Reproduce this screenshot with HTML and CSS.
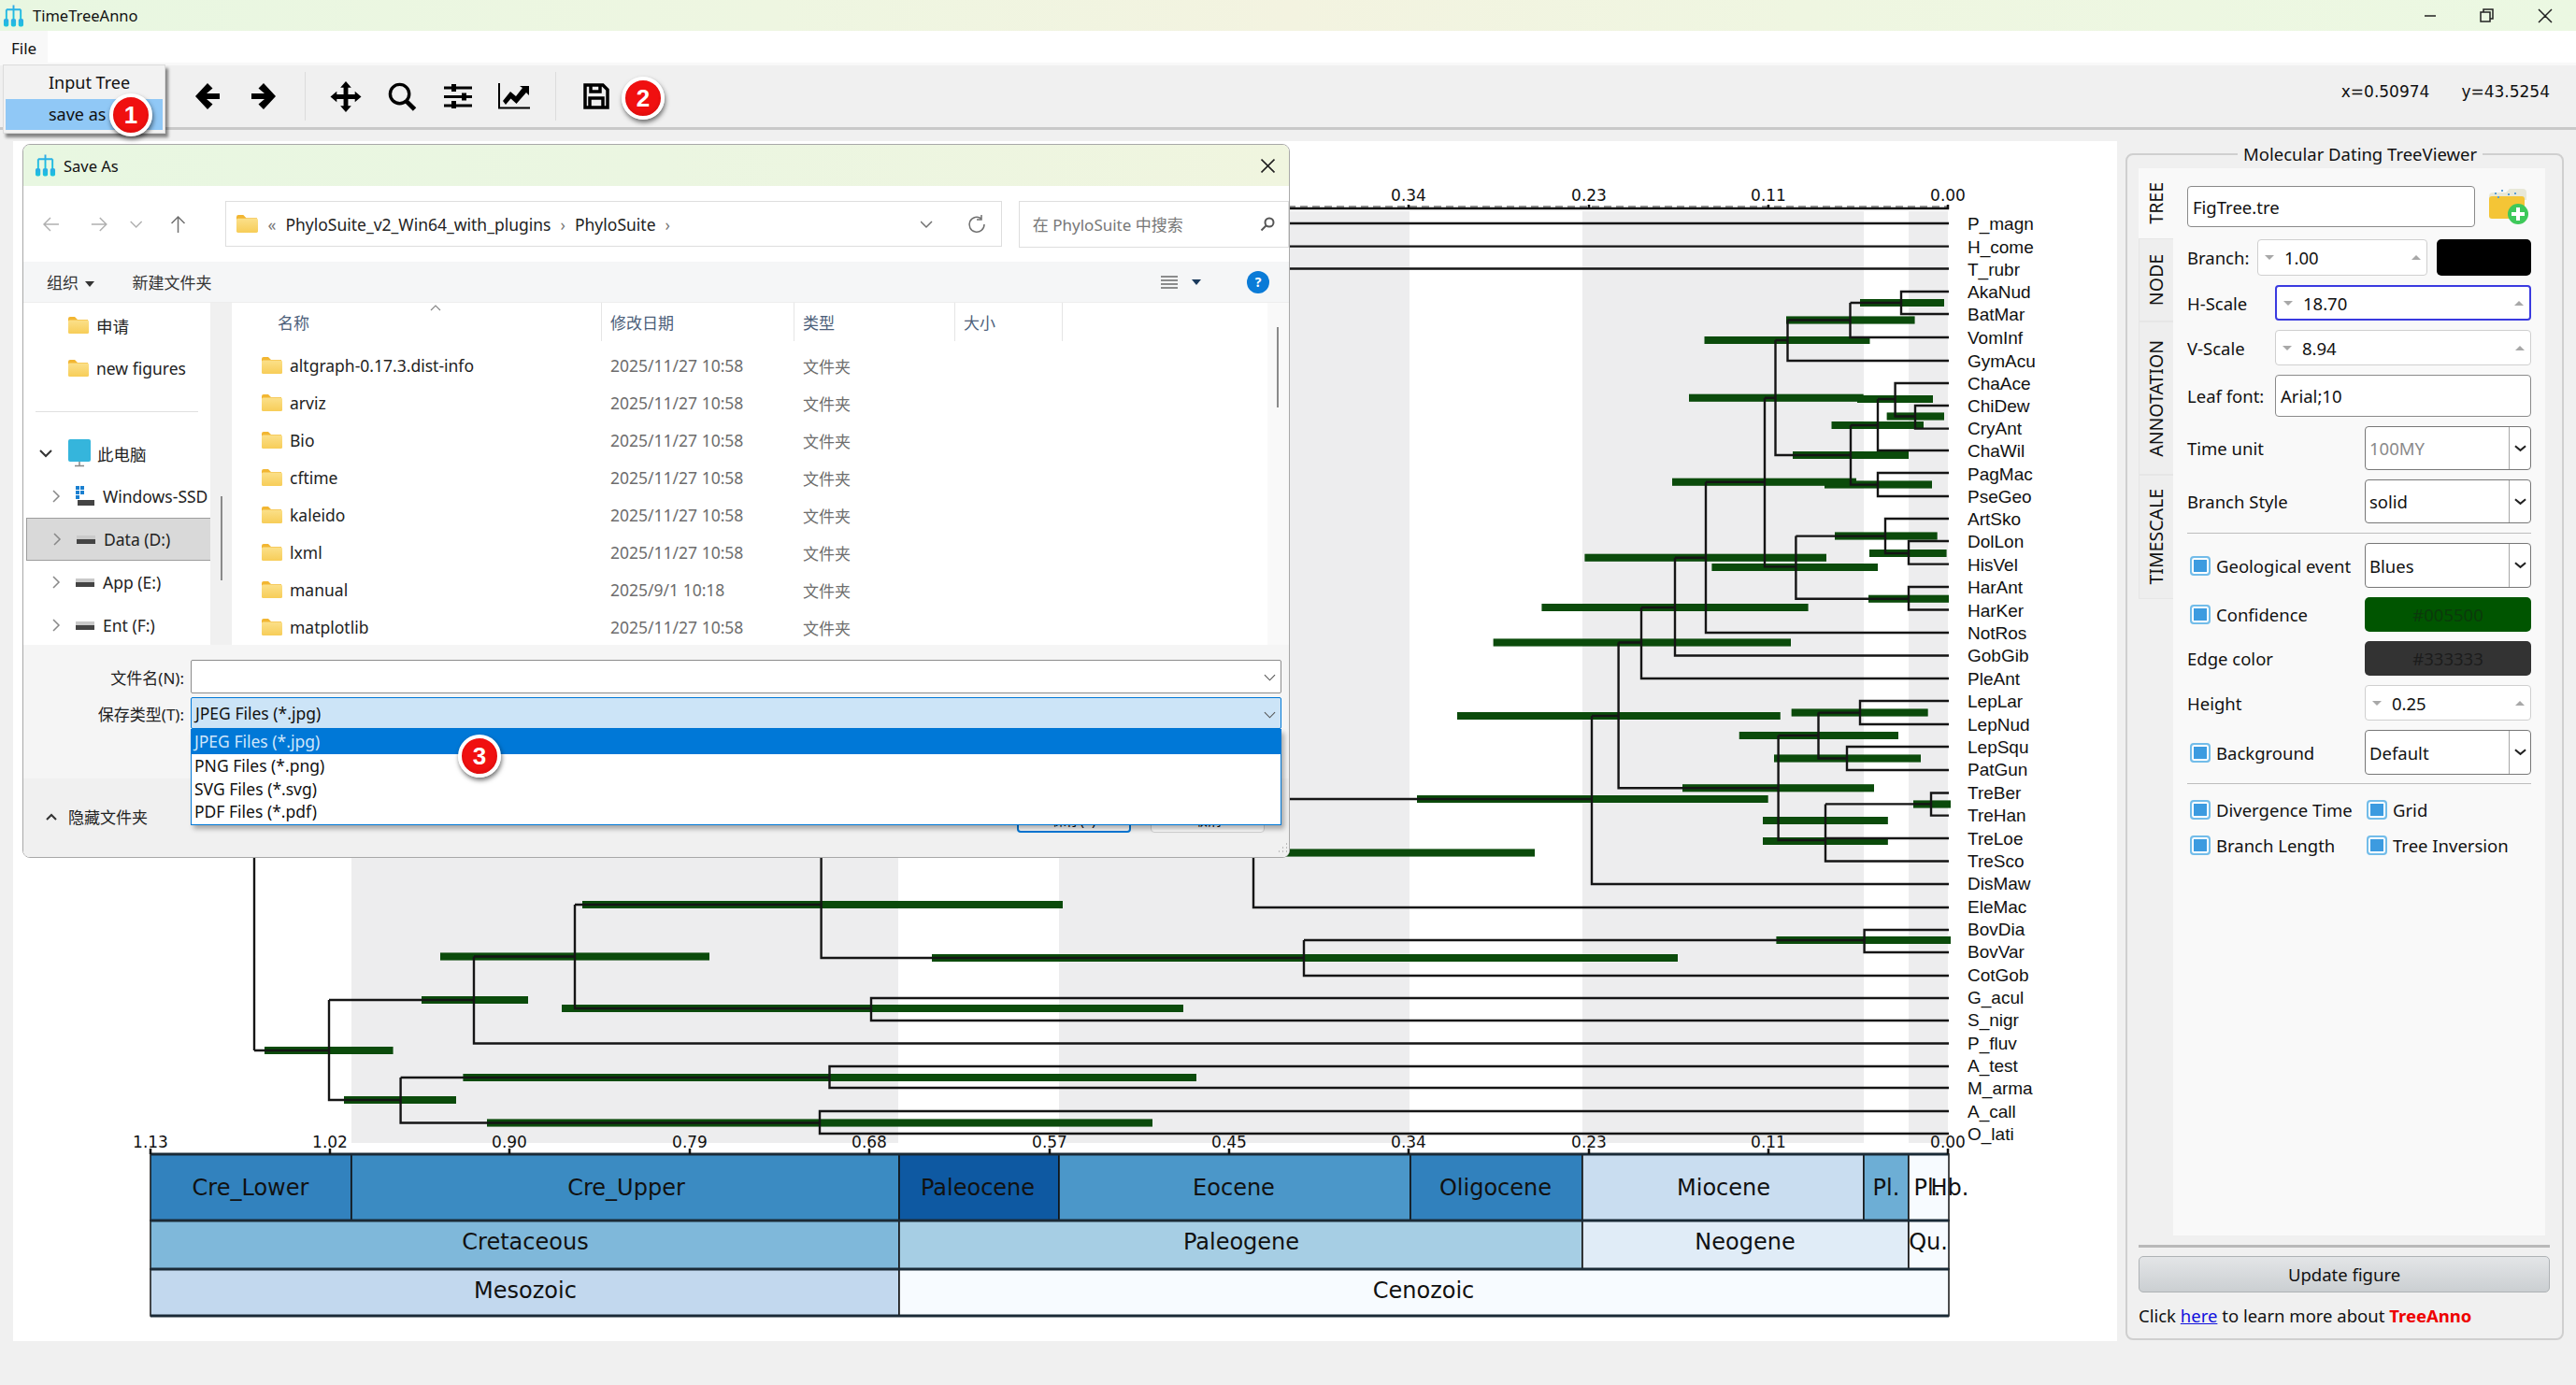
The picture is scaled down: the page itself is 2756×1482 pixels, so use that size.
FILE: index.html

```html
<!DOCTYPE html>
<html lang="en">
<head>
    <meta charset="UTF-8">
    <title>TimeTreeAnno</title>
    <link rel="stylesheet" href="styles.css">
</head>
<body>
    <svg class="defs" width="0" height="0">
        <defs>
            <linearGradient id="logoGrad" x1="0" y1="0" x2="0" y2="1">
                <stop offset="0" stop-color="#2fa8e8"/>
                <stop offset="1" stop-color="#19c6dc"/>
            </linearGradient>
            <linearGradient id="folderGrad" x1="0" y1="0" x2="0" y2="1">
                <stop offset="0" stop-color="#fbe08a"/>
                <stop offset="1" stop-color="#f7cd58"/>
            </linearGradient>
            <symbol id="logo" viewBox="0 0 24 24">
                <path class="logo-line" d="M12 0V5M4 5H20M4 5V15M20 5V15M12 5V15"/>
                <rect class="logo-pill" x="1" y="15" width="5.5" height="9" rx="2"/>
                <rect class="logo-pill" x="9.2" y="15" width="5.5" height="9" rx="2"/>
                <rect class="logo-pill" x="17.5" y="15" width="5.5" height="9" rx="2"/>
            </symbol>
            <symbol id="folder" viewBox="0 0 22 18">
                <path class="folder-tab" d="M0 2Q0 0 2 0H7L10 3H21V8H0Z"/>
                <rect class="folder-body" x="0" y="3.5" width="22" height="14.5" rx="1.5"/>
            </symbol>
            <symbol id="chev" viewBox="0 0 10 16">
                <path class="chev-line" d="M2 2L8 8L2 14"/>
            </symbol>
            <symbol id="drive" viewBox="0 0 20 12">
                <rect class="drive-top" x="0" y="2" width="20" height="4"/>
                <rect class="drive-base" x="0" y="6" width="20" height="5"/>
            </symbol>
        </defs>
    </svg>

    <div class="titlebar">
        <svg class="logo"><use href="#logo"/></svg>
        <span class="app-title">TimeTreeAnno</span>
        <svg class="win-controls" viewBox="0 0 140 20">
            <path class="win-line" d="M0 10H12M60 6H70V16H60ZM63 6V3H73V13H70M122 3L136 17M136 3L122 17"/>
        </svg>
    </div>

    <div class="menubar"><span class="menu-file">File</span></div>

    <div class="toolbar">
        <div class="tool"><svg class="icon-arrow" viewBox="0 0 28 30"><path d="M14 1L19.5 6.5L13 12H27V18H13L19.5 23.5L14 29L1 15Z"/></svg></div>
        <div class="tool"><svg class="icon-arrow" viewBox="0 0 28 30"><path d="M14 1L8.500 6.500L15 12H1V18H15L8.500 23.500L14 29L27 15Z"/></svg></div>
        <div class="tool-sep"></div>
        <div class="tool"><svg class="icon-move" viewBox="0 0 34 34"><path d="M17 0L23 7H19.500V14.500H27V11L34 17L27 23V19.500H19.500V27H23L17 34L11 27H14.500V19.500H7V23L0 17L7 11V14.500H14.500V7H11Z"/></svg></div>
        <div class="tool"><svg class="icon-line icon-search" viewBox="0 0 32 32"><circle cx="13.500" cy="13" r="10.500"/><path class="thick" d="M21 21L30 30"/></svg></div>
        <div class="tool"><svg class="icon-sliders" viewBox="0 0 30 26"><path d="M0 2.500H30V5.500H0ZM0 12H30V15H0ZM0 21.500H30V24.500H0Z"/><path d="M8 0H13V8H8ZM19 9.500H24V17.500H19ZM8 18H13V26H8Z"/></svg></div>
        <div class="tool"><svg class="icon-chart" viewBox="0 0 34 28"><path d="M0 0H2V25.500H34V27.500H0Z"/><path d="M5 19L13 9L19 14L26 5L23 3H33V13L30 10L19.500 22L13.500 16.500L8 23Z"/></svg></div>
        <div class="tool-sep"></div>
        <div class="tool"><svg class="icon-line icon-save" viewBox="0 0 28 28"><path d="M2 2H21L26 7V26H2Z"/><path d="M8 2V9H18V2M7 26V16H21V26"/></svg></div>
        <div class="coords"><span>x=0.50974</span><span>y=43.5254</span></div>
    </div>

    <div class="main">
        <div class="plot">
            <svg class="figure" viewBox="14 151 2251 1284" width="2251" height="1284">
                <g class="bands">
                    <rect x="376" y="226" width="585" height="997"/>
                    <rect x="1133" y="226" width="375" height="997"/>
                    <rect x="1693" y="226" width="301" height="997"/>
                    <rect x="2042" y="226" width="42" height="997"/>
                </g>

                <path class="axis-faint" d="M1300 221H2085"/>
                <path class="axis" d="M1300 223H2085M1507 219V224M1700 219V224M1892 219V224M2084 219V224"/>
                <g class="tick-text">
                    <text x="1507" y="215">0.34</text>
                    <text x="1700" y="215">0.23</text>
                    <text x="1892" y="215">0.11</text>
                    <text x="2084" y="215">0.00</text>
                    <text x="161" y="1228">1.13</text>
                    <text x="353" y="1228">1.02</text>
                    <text x="545" y="1228">0.90</text>
                    <text x="738" y="1228">0.79</text>
                    <text x="930" y="1228">0.68</text>
                    <text x="1123" y="1228">0.57</text>
                    <text x="1315" y="1228">0.45</text>
                    <text x="1507" y="1228">0.34</text>
                    <text x="1700" y="1228">0.23</text>
                    <text x="1892" y="1228">0.11</text>
                    <text x="2084" y="1228">0.00</text>
                </g>

                <g class="bars-halo"><use href="#confBars"/></g>
                <path id="confBars" class="bars" d="M1990 324H2080M1911 342.500H2048.500M1823.600 364H2000.400M1807 425.700H1993.600M2018.700 445.500H2080M1987 427H2068M1959.600 455H2058M1918 487H2042M1952 518.600H2067M1789 515.700H1986M2000 592H2082.500M1963 573.600H2072.600M1999 640.700H2085M1831.500 607H2009M1695.500 596.800H1954M1649.500 650H1934.500M1597.700 687.500H1916M1559 766H1904.700M1916.700 762.600H2062.600M1898 811.500H2055M1860.800 787H2031M2047 860.400H2087M1886 878H2019.800M1886 900H2019.800M1800 843.300H2005M1516 855H1891.600M1300 912.600H1642M1900.500 1006H2087M997 1025H1795M623 968H1137M601 1079H1266M471 1023.500H759M451 1070H565M283 1124H420.500M495.500 1153H1280M521 1201.500H1233M368 1177H488"/>

                <path class="tree" d="M1300 239H2085M1300 263.600H2085M1300 287.500H2085
                    M2085 312H2034V336H2085M1979.500 324H2034M1979.500 324V361H2085M1912.500 342.500H1979.500M1912.500 342.500V386H2085M1899.500 364H1912.500M1899.500 364V487H1980M1888 425.700H1899.500
                    M2085 410H2027.600V445.500H2049M2085 434H2049V458.600H2085M2009 427H2027.600M2009 427V482H2085M1980 455H2009M1980 455V518.600H2009M2085 506H2009V531H2085
                    M1888 425.700V606.400H1921.400M1825 515.700H1888M1921.400 573.600V640.700H2042M1921.400 573.600H2017M2085 555H2017V592H2042M2085 579H2042V603.600H2085M2085 628H2042V652.500H2085
                    M1825 515.700V677H2085M1792 596.800H1825M1792 596.800V701.500H2085M1756 650H1792M1756 650V726H2085M1731.600 687.500H1756M1731.600 687.500V843.300H1902.600M1703 766H1731.600
                    M1902.600 787V899H1953M1902.600 787H1945.500M1945.500 762.600V811.500H1976M1945.500 762.600H1990M2085 750H1990V775H2085M2085 799H1976V824H2085M1953 860.400V921.500H2085M1953 897H2085M1953 860.400H2066M2085 848.500H2066V872.600H2085
                    M1703 766V946H2085M1341 855H1703M1341 855V971H2085M878.600 913H1341
                    M878.600 913V1025H1395M1395 1006V1044H2085M1395 1006H1994.600M2085 995H1994.600V1019H2085
                    M615 968H878.600M615 968V1079H932M2085 1068H932V1092H2085M507 1023.500H615M507 1023.500V1116.500H2085M352 1070H507M352 1070V1177H428.600M272 1124H352M272 700V1124
                    M428.600 1153V1201.500H877M428.600 1153H887.500M2085 1141H887.500V1164H2085M2085 1189H877V1213H2085"/>

                <g class="leaf-text">
                    <text x="2105" y="246">P_magn</text>
                    <text x="2105" y="271">H_come</text>
                    <text x="2105" y="295">T_rubr</text>
                    <text x="2105" y="319">AkaNud</text>
                    <text x="2105" y="343">BatMar</text>
                    <text x="2105" y="368">VomInf</text>
                    <text x="2105" y="393">GymAcu</text>
                    <text x="2105" y="417">ChaAce</text>
                    <text x="2105" y="441">ChiDew</text>
                    <text x="2105" y="465">CryAnt</text>
                    <text x="2105" y="489">ChaWil</text>
                    <text x="2105" y="514">PagMac</text>
                    <text x="2105" y="538">PseGeo</text>
                    <text x="2105" y="562">ArtSko</text>
                    <text x="2105" y="586">DolLon</text>
                    <text x="2105" y="611">HisVel</text>
                    <text x="2105" y="635">HarAnt</text>
                    <text x="2105" y="660">HarKer</text>
                    <text x="2105" y="684">NotRos</text>
                    <text x="2105" y="708">GobGib</text>
                    <text x="2105" y="733">PleAnt</text>
                    <text x="2105" y="757">LepLar</text>
                    <text x="2105" y="782">LepNud</text>
                    <text x="2105" y="806">LepSqu</text>
                    <text x="2105" y="830">PatGun</text>
                    <text x="2105" y="855">TreBer</text>
                    <text x="2105" y="879">TreHan</text>
                    <text x="2105" y="904">TreLoe</text>
                    <text x="2105" y="928">TreSco</text>
                    <text x="2105" y="952">DisMaw</text>
                    <text x="2105" y="977">EleMac</text>
                    <text x="2105" y="1001">BovDia</text>
                    <text x="2105" y="1025">BovVar</text>
                    <text x="2105" y="1050">CotGob</text>
                    <text x="2105" y="1074">G_acul</text>
                    <text x="2105" y="1098">S_nigr</text>
                    <text x="2105" y="1123">P_fluv</text>
                    <text x="2105" y="1147">A_test</text>
                    <text x="2105" y="1171">M_arma</text>
                    <text x="2105" y="1196">A_call</text>
                    <text x="2105" y="1220">O_lati</text>
                </g>

                <!-- geological time scale -->
                <g class="scale-cells">
                    <rect x="161" y="1235" width="215" height="71" fill="#3282be"/>
                    <rect x="376" y="1235" width="586" height="71" fill="#3b8bc2"/>
                    <rect x="962" y="1235" width="171" height="71" fill="#0e59a2"/>
                    <rect x="1133" y="1235" width="376" height="71" fill="#4b97c9"/>
                    <rect x="1509" y="1235" width="184" height="71" fill="#3181bd"/>
                    <rect x="1693" y="1235" width="301" height="71" fill="#c9ddf0"/>
                    <rect x="1994" y="1235" width="48" height="71" fill="#6daed5"/>
                    <rect x="2042" y="1235" width="43" height="71" fill="#f7fbff"/>
                    <rect x="161" y="1306" width="801" height="52" fill="#7fb8da"/>
                    <rect x="962" y="1306" width="731" height="52" fill="#a6cee4"/>
                    <rect x="1693" y="1306" width="349" height="52" fill="#e0ecf7"/>
                    <rect x="2042" y="1306" width="43" height="52" fill="#f7fbff"/>
                    <rect x="161" y="1358" width="801" height="50" fill="#c2d8ee"/>
                    <rect x="962" y="1358" width="1123" height="50" fill="#f7fbff"/>
                </g>
                <path class="scale-h" d="M161 1235H2085M161 1306H2085M161 1358H2085M161 1408H2085"/>
                <path class="axis" d="M161 1229V1235M353 1229V1235M545 1229V1235M738 1229V1235M930 1229V1235M1123 1229V1235M1315 1229V1235M1507 1229V1235M1700 1229V1235M1892 1229V1235M2084 1229V1235"/>
                <g class="scale-text">
                    <text x="268" y="1279">Cre_Lower</text>
                    <text x="670" y="1279">Cre_Upper</text>
                    <text x="1046" y="1279">Paleocene</text>
                    <text x="1320" y="1279">Eocene</text>
                    <text x="1600" y="1279">Oligocene</text>
                    <text x="1844" y="1279">Miocene</text>
                    <text x="2018" y="1279">Pl.</text>
                    <text x="2062" y="1279">Pl.</text>
                    <text x="2086" y="1279">Hb.</text>
                    <text x="562" y="1337">Cretaceous</text>
                    <text x="1328" y="1337">Paleogene</text>
                    <text x="1867" y="1337">Neogene</text>
                    <text x="2063" y="1337">Qu.</text>
                    <text x="562" y="1389">Mesozoic</text>
                    <text x="1523" y="1389">Cenozoic</text>
                </g>
            </svg>
        </div>

        <div class="panel">
            <div class="panel-title">Molecular Dating TreeViewer</div>
            <div class="tab-area">
                <div class="tabs">
                    <div class="tab tab-tree active"><span>TREE</span></div>
                    <div class="tab tab-node"><span>NODE</span></div>
                    <div class="tab tab-annot"><span>ANNOTATION</span></div>
                    <div class="tab tab-time"><span>TIMESCALE</span></div>
                </div>
                <div class="pane">
                    <div class="row row-file">
                        <div class="text-field field-file">FigTree.tre</div>
                        <svg class="add-folder" viewBox="0 0 42 38">
                            <path class="add-folder-tab" d="M0 8Q0 4 4 4H18L22 0H36Q40 0 40 4V12H0Z"/>
                            <rect class="add-folder-body" x="0" y="8" width="38" height="24" rx="3"/>
                            <path class="add-folder-dots" d="M6 5H8M13 2H15M20 6H22M9 9H11M27 5H29"/>
                            <circle class="add-plus-bg" cx="31" cy="27" r="11"/>
                            <path class="add-plus" d="M31 20V34M24 27H38"/>
                        </svg>
                    </div>
                    <div class="row row-39">
                        <label class="lbl lbl-branch">Branch:</label>
                        <div class="spin spin-branch"><i class="tri-down"></i><span class="spin-val">1.00</span><i class="tri-up"></i></div>
                        <div class="swatch swatch-black"></div>
                    </div>
                    <div class="row row-38">
                        <label class="lbl">H-Scale</label>
                        <div class="spin spin-wide spin-focus"><i class="tri-down"></i><span class="spin-val">18.70</span><i class="tri-up"></i></div>
                    </div>
                    <div class="row row-38">
                        <label class="lbl">V-Scale</label>
                        <div class="spin spin-wide"><i class="tri-down"></i><span class="spin-val">8.94</span><i class="tri-up"></i></div>
                    </div>
                    <div class="row row-45">
                        <label class="lbl">Leaf font:</label>
                        <div class="text-field field-wide">Arial;10</div>
                    </div>
                    <div class="row row-47">
                        <label class="lbl">Time unit</label>
                        <div class="combo combo-off"><span>100MY</span><b class="combo-btn"><svg viewBox="0 0 14 8"><path d="M1 1L7 6L13 1"/></svg></b></div>
                    </div>
                    <div class="row row-47">
                        <label class="lbl">Branch Style</label>
                        <div class="combo"><span>solid</span><b class="combo-btn"><svg viewBox="0 0 14 8"><path d="M1 1L7 6L13 1"/></svg></b></div>
                    </div>
                    <div class="rule"></div>
                    <div class="row row-48">
                        <div class="check-lbl"><i class="check"></i>Geological event</div>
                        <div class="combo"><span>Blues</span><b class="combo-btn"><svg viewBox="0 0 14 8"><path d="M1 1L7 6L13 1"/></svg></b></div>
                    </div>
                    <div class="row row-37">
                        <div class="check-lbl"><i class="check"></i>Confidence</div>
                        <div class="swatch swatch-green">#005500</div>
                    </div>
                    <div class="row row-37">
                        <label class="lbl">Edge color</label>
                        <div class="swatch swatch-dark">#333333</div>
                    </div>
                    <div class="row row-38">
                        <label class="lbl">Height</label>
                        <div class="spin spin-half"><i class="tri-down"></i><span class="spin-val">0.25</span><i class="tri-up"></i></div>
                    </div>
                    <div class="row row-48">
                        <div class="check-lbl"><i class="check"></i>Background</div>
                        <div class="combo"><span>Default</span><b class="combo-btn"><svg viewBox="0 0 14 8"><path d="M1 1L7 6L13 1"/></svg></b></div>
                    </div>
                    <div class="rule rule-tight"></div>
                    <div class="check-grid">
                        <div class="check-lbl"><i class="check"></i>Divergence Time</div>
                        <div class="check-lbl"><i class="check"></i>Grid</div>
                        <div class="check-lbl"><i class="check"></i>Branch Length</div>
                        <div class="check-lbl"><i class="check"></i>Tree Inversion</div>
                    </div>
                </div>
            </div>
            <div class="panel-rule"></div>
            <button class="update-btn">Update figure</button>
            <p class="panel-link">Click <a href="#">here</a> to learn more about <strong>TreeAnno</strong></p>
        </div>
    </div>

    <!-- File menu popup -->
    <div class="popup">
        <div class="popup-item">Input Tree</div>
        <div class="popup-item popup-hot">save as</div>
    </div>

    <!-- Save As dialog -->
    <div class="dialog">
        <div class="dlg-title">
            <svg class="dlg-logo"><use href="#logo"/></svg>
            <span>Save As</span>
            <svg class="dlg-close" viewBox="0 0 14 14"><path d="M0.500 0.500L13.500 13.500M13.500 0.500L0.500 13.500"/></svg>
        </div>
        <div class="dlg-nav">
            <svg class="nav-icons" viewBox="0 0 170 24">
                <path class="nav-off" d="M1 12H17M8 5L1 12L8 19M52 12H68M61 5L68 12L61 19M94 9L100 15L106 9"/>
                <path class="nav-up" d="M145 21V4M138 11L145 4L152 11"/>
            </svg>
            <div class="addr">
                <svg class="addr-folder"><use href="#folder"/></svg>
                <span class="crumb-sep">«</span>
                <span>PhyloSuite_v2_Win64_with_plugins</span>
                <span class="crumb-sep">›</span>
                <span>PhyloSuite</span>
                <span class="crumb-sep">›</span>
                <svg class="addr-tools" viewBox="0 0 70 20">
                    <path class="nav-line" d="M0 7L6 13L12 7"/>
                    <path class="nav-line" d="M68 10A8 8 0 1 1 65 4M65 0V5H60"/>
                </svg>
            </div>
            <div class="search-box">
                <span>在 PhyloSuite 中搜索</span>
                <svg class="search-glass" viewBox="0 0 16 16"><circle cx="10" cy="6" r="4.500"/><path d="M6.500 9.500L1.500 14.500"/></svg>
            </div>
        </div>
        <div class="dlg-tools">
            <span class="tools-item">组织 <i class="caret"></i></span>
            <span class="tools-item">新建文件夹</span>
            <svg class="view-icon" viewBox="0 0 18 14"><path d="M0 1H18M0 5H18M0 9H18M0 13H18"/></svg>
            <i class="caret caret-dark"></i>
            <span class="help">?</span>
        </div>
        <div class="dlg-body">
            <div class="side">
                <div class="side-row side-folder"><svg class="ico-folder"><use href="#folder"/></svg>申请</div>
                <div class="side-row side-folder"><svg class="ico-folder"><use href="#folder"/></svg>new figures</div>
                <div class="side-rule"></div>
                <div class="side-row side-pc">
                    <svg class="chev-down" viewBox="0 0 16 10"><path d="M2 2L8 8L14 2"/></svg>
                    <svg class="ico-pc" viewBox="0 0 24 30"><rect class="pc-screen" x="0" y="0" width="24" height="24" rx="2"/><path class="pc-stand" d="M12 24V28M7 28.500H17"/></svg>此电脑
                </div>
                <div class="side-row side-drive"><svg class="ico-chev"><use href="#chev"/></svg><svg class="ico-win" viewBox="0 0 20 22"><path class="win-sq" d="M0 0H4V4H0ZM5 0H9V4H5ZM0 5H4V9H0ZM5 5H9V9H5ZM0 10H4V14H0Z"/><path class="drive-base" d="M2 15H20V21H2Z"/></svg>Windows-SSD (C:)</div>
                <div class="side-row side-drive side-hot"><svg class="ico-chev"><use href="#chev"/></svg><svg class="ico-drive"><use href="#drive"/></svg>Data (D:)</div>
                <div class="side-row side-drive"><svg class="ico-chev"><use href="#chev"/></svg><svg class="ico-drive"><use href="#drive"/></svg>App (E:)</div>
                <div class="side-row side-drive"><svg class="ico-chev"><use href="#chev"/></svg><svg class="ico-drive"><use href="#drive"/></svg>Ent (F:)</div>
            </div>
            <div class="side-scroll"><i class="thumb"></i></div>
            <div class="list">
                <div class="list-head">
                    <span class="col-name">名称<svg class="sort-mark" viewBox="0 0 12 7"><path d="M1 6L6 1L11 6"/></svg></span>
                    <span class="col-date">修改日期</span>
                    <span class="col-type">类型</span>
                    <span class="col-size">大小</span>
                </div>
                <div class="file-row"><span class="file-name"><svg class="ico-folder"><use href="#folder"/></svg>altgraph-0.17.3.dist-info</span><span class="file-date">2025/11/27 10:58</span><span class="file-type">文件夹</span></div>
                <div class="file-row"><span class="file-name"><svg class="ico-folder"><use href="#folder"/></svg>arviz</span><span class="file-date">2025/11/27 10:58</span><span class="file-type">文件夹</span></div>
                <div class="file-row"><span class="file-name"><svg class="ico-folder"><use href="#folder"/></svg>Bio</span><span class="file-date">2025/11/27 10:58</span><span class="file-type">文件夹</span></div>
                <div class="file-row"><span class="file-name"><svg class="ico-folder"><use href="#folder"/></svg>cftime</span><span class="file-date">2025/11/27 10:58</span><span class="file-type">文件夹</span></div>
                <div class="file-row"><span class="file-name"><svg class="ico-folder"><use href="#folder"/></svg>kaleido</span><span class="file-date">2025/11/27 10:58</span><span class="file-type">文件夹</span></div>
                <div class="file-row"><span class="file-name"><svg class="ico-folder"><use href="#folder"/></svg>lxml</span><span class="file-date">2025/11/27 10:58</span><span class="file-type">文件夹</span></div>
                <div class="file-row"><span class="file-name"><svg class="ico-folder"><use href="#folder"/></svg>manual</span><span class="file-date">2025/9/1 10:18</span><span class="file-type">文件夹</span></div>
                <div class="file-row"><span class="file-name"><svg class="ico-folder"><use href="#folder"/></svg>matplotlib</span><span class="file-date">2025/11/27 10:58</span><span class="file-type">文件夹</span></div>
            </div>
            <div class="list-scroll"><i class="thumb"></i></div>
        </div>
        <div class="dlg-foot">
            <div class="foot-fields">
                <div class="foot-row foot-row-name">
                    <label class="foot-lbl">文件名(N):</label>
                    <div class="foot-input"><svg class="foot-chev" viewBox="0 0 14 8"><path d="M1 1L7 7L13 1"/></svg></div>
                </div>
                <div class="foot-row foot-row-type">
                    <label class="foot-lbl">保存类型(T):</label>
                    <div class="foot-combo">
                        <span>JPEG Files (*.jpg)</span>
                        <svg class="foot-chev" viewBox="0 0 14 8"><path d="M1 1L7 7L13 1"/></svg>
                        <div class="dropdown">
                            <div class="dd-item dd-hot">JPEG Files (*.jpg)</div>
                            <div class="dd-item">PNG Files (*.png)</div>
                            <div class="dd-item">SVG Files (*.svg)</div>
                            <div class="dd-item">PDF Files (*.pdf)</div>
                        </div>
                    </div>
                </div>
            </div>
            <div class="foot-band">
                <span class="hide-folders"><svg class="chev-up" viewBox="0 0 12 8"><path d="M1 7L6 2L11 7"/></svg>隐藏文件夹</span>
                <button class="dlg-btn dlg-btn-main">保存(S)</button>
                <button class="dlg-btn">取消</button>
            </div>
            <svg class="grip" viewBox="0 0 14 14"><path d="M12 2H13M12 6H13M8 6H9M12 10H13M8 10H9M4 10H5"/></svg>
        </div>
    </div>

    <span class="badge badge-1">1</span>
    <span class="badge badge-2">2</span>
    <span class="badge badge-3">3</span>
</body>
</html>
```

FILE: styles.css

```css
* {
    box-sizing: border-box;
}
html, body {
    margin: 0;
    padding: 0;
    height: 100%;
}
body {
    width: 2756px;
    height: 1482px;
    overflow: hidden;
    position: relative;
    display: flex;
    flex-direction: column;
    background-color: #f0f0f0;
    color: #111;
    font-family: "Noto Sans", "Noto Sans CJK SC", sans-serif;
    font-size: 18px;
}
.defs {
    position: absolute;
}
.logo-line {
    fill: none;
    stroke: url(#logoGrad);
    stroke-width: 2;
}
.logo-pill {
    fill: url(#logoGrad);
}
.folder-tab {
    fill: #f2b632;
}
.folder-body {
    fill: url(#folderGrad);
}
.chev-line {
    fill: none;
    stroke: #888;
    stroke-width: 1.5;
}
.drive-top {
    fill: #c9c9c9;
}
.drive-base {
    fill: #444;
}

/* main window chrome */
.titlebar {
    height: 33px;
    display: flex;
    align-items: center;
    padding-left: 3px;
    background: linear-gradient(90deg, #e8f7e1 0%, #eef6e1 30%, #f3f3e0 50%, #eff6e1 70%, #ebf8e2 100%);
}
.logo {
    width: 23px;
    height: 24px;
}
.app-title {
    margin-left: 9px;
    font-size: 16.500px;
}
.win-controls {
    width: 140px;
    height: 20px;
    margin-left: auto;
    margin-right: 22px;
}
.win-line {
    fill: none;
    stroke: #222;
    stroke-width: 1.500;
}
.menubar {
    height: 37px;
    background-color: #fff;
    border-bottom: 3px solid #f8f8f8;
}
.menu-file {
    display: block;
    width: 51px;
    height: 34px;
    line-height: 37px;
    padding-left: 12px;
    background-color: #f8f8f8;
    font-size: 17px;
}
.toolbar {
    height: 69px;
    display: flex;
    align-items: center;
    padding-left: 192px;
    border-bottom: 3px solid #c9c9c9;
    background-color: #f0f0f0;
}
.tool {
    width: 60px;
    height: 40px;
    display: flex;
    align-items: center;
    justify-content: center;
}
.tool svg {
    fill: #000;
}
.tool-sep {
    width: 1px;
    height: 52px;
    margin: 0 13px 0 14px;
    background-color: #dcdcdc;
}
.icon-arrow {
    width: 28px;
    height: 30px;
}
.icon-move {
    width: 34px;
    height: 33px;
}
.icon-search {
    width: 32px;
    height: 31px;
}
.tool .icon-line {
    fill: none;
    stroke: #000;
    stroke-width: 3.500;
}
.thick {
    stroke-width: 5;
}
.icon-sliders {
    width: 30px;
    height: 26px;
}
.icon-chart {
    width: 34px;
    height: 28px;
}
.icon-save {
    width: 28px;
    height: 28px;
}
.coords {
    margin-left: auto;
    margin-right: 28px;
    margin-bottom: 10px;
    display: flex;
    gap: 34px;
    font-family: "DejaVu Sans", sans-serif;
    font-size: 17px;
}

/* figure area */
.main {
    flex: 1;
    display: flex;
    align-items: flex-start;
    padding: 12px 0 0 14px;
}
.plot {
    width: 2251px;
    height: 1284px;
    background-color: #fff;
}
.figure {
    display: block;
}
.bands rect {
    fill: #ededee;
}
.axis {
    fill: none;
    stroke: #111;
    stroke-width: 2.500;
}
.axis-faint {
    fill: none;
    stroke: #777;
    stroke-width: 1.500;
    stroke-dasharray: 8 5;
}
.tick-text text {
    font-family: "DejaVu Sans", sans-serif;
    font-size: 17px;
    text-anchor: middle;
    fill: #111;
}
.leaf-text text {
    font-family: "Liberation Sans", sans-serif;
    font-size: 19px;
    fill: #111;
}
.bars {
    fill: none;
    stroke: #0b4b0b;
    stroke-width: 8;
}
.bars-halo {
    opacity: 0.35;
}
.bars-halo use {
    stroke: #888;
    stroke-width: 10;
}
.tree {
    fill: none;
    stroke: #151515;
    stroke-width: 2.400;
}
.scale-cells rect {
    stroke: #111;
    stroke-width: 1.500;
}
.scale-h {
    fill: none;
    stroke: #1a2a36;
    stroke-width: 3;
}
.scale-text text {
    font-family: "DejaVu Sans", sans-serif;
    font-size: 24px;
    text-anchor: middle;
    fill: #111;
}

/* right panel */
.panel {
    position: relative;
    width: 469px;
    height: 1270px;
    margin: 13px 0 0 9px;
    padding: 14px 13px 0 12px;
    border: 2px solid #cfcfcf;
    border-radius: 8px;
}
.panel-title {
    position: absolute;
    top: -14px;
    left: 118px;
    padding: 0 6px;
    background-color: #f0f0f0;
    font-size: 18.500px;
    white-space: nowrap;
}
.tab-area {
    display: flex;
}
.tabs {
    width: 37px;
    display: flex;
    flex-direction: column;
}
.tab {
    display: flex;
    align-items: center;
    justify-content: center;
    border: 1px solid #e6e6e6;
    border-right: none;
    background-color: #eeeeee;
    font-size: 19.500px;
}
.tab span {
    writing-mode: vertical-rl;
    transform: rotate(180deg);
    line-height: 1;
}
.tab.active {
    background-color: #f9f9f9;
    border-color: #f9f9f9;
}
.tab-tree {
    height: 75px;
}
.tab-node {
    height: 89px;
}
.tab-annot {
    height: 164px;
}
.tab-time {
    height: 133px;
}
.pane {
    width: 398px;
    height: 1142px;
    padding: 19px 15px 0;
    display: flex;
    flex-direction: column;
    gap: 10px;
    background-color: #f9f9f9;
}
.row {
    display: flex;
    align-items: center;
    justify-content: space-between;
    font-size: 18.500px;
    white-space: nowrap;
}
.row-file {
    height: 44px;
    margin-bottom: 3px;
}
.row-37 {
    height: 37px;
}
.row-38 {
    height: 38px;
}
.row-39 {
    height: 39px;
}
.row-45 {
    height: 45px;
}
.row-47 {
    height: 47px;
}
.row-48 {
    height: 48px;
}
.text-field {
    height: 100%;
    display: flex;
    align-items: center;
    padding-left: 5px;
    border: 1px solid #8a8a8a;
    border-radius: 4px;
    background-color: #fff;
}
.field-file {
    width: 308px;
}
.field-wide {
    width: 274px;
}
.add-folder {
    width: 42px;
    height: 38px;
    margin-right: 3px;
}
.add-folder-tab {
    fill: #e8e8d8;
}
.add-folder-body {
    fill: #f4c536;
}
.add-folder-dots {
    fill: none;
    stroke: #5a9fd4;
    stroke-width: 2;
}
.add-plus-bg {
    fill: #3ec95a;
}
.add-plus {
    fill: none;
    stroke: #fff;
    stroke-width: 4;
}
.spin {
    height: 100%;
    display: flex;
    align-items: center;
    padding: 0 6px 0 7px;
    border: 1px solid #cfcfcf;
    border-radius: 4px;
    background-color: #fff;
}
.spin-val {
    margin-left: 11px;
}
.spin-branch {
    width: 182px;
    margin-right: 10px;
}
.spin-wide {
    width: 274px;
}
.spin-half {
    width: 178px;
}
.spin-focus {
    border: 2px solid #3a3ae0;
}
.tri-down, .tri-up {
    width: 0;
    height: 0;
    border-left: 5px solid transparent;
    border-right: 5px solid transparent;
}
.tri-down {
    border-top: 5px solid #a8a8a8;
}
.tri-up {
    margin-left: auto;
    border-bottom: 5px solid #a8a8a8;
}
.lbl-branch {
    flex: 1;
}
.swatch {
    width: 101px;
    height: 100%;
    display: flex;
    align-items: center;
    justify-content: center;
    border-radius: 5px;
}
.swatch-black {
    background-color: #000;
}
.swatch-green, .swatch-dark {
    width: 178px;
}
.swatch-green {
    background-color: #005500;
    color: #0b3a0b;
}
.swatch-dark {
    background-color: #333;
    color: #1c1c1c;
}
.combo {
    width: 178px;
    height: 100%;
    display: flex;
    align-items: center;
    padding-left: 4px;
    border: 1px solid #777;
    border-radius: 4px;
    background-color: #fff;
}
.combo-off {
    color: #8a8a8a;
}
.combo-btn {
    width: 23px;
    height: 100%;
    margin-left: auto;
    display: flex;
    align-items: center;
    justify-content: center;
    border-left: 1px solid #a8a8a8;
}
.combo-btn svg {
    width: 13px;
    height: 8px;
    fill: none;
    stroke: #222;
    stroke-width: 2.200;
}
.rule {
    height: 1px;
    background-color: #bdbdbd;
}
.rule-tight {
    margin-bottom: -2px;
    margin-top: -1px;
}
.check-lbl {
    display: flex;
    align-items: center;
    font-size: 18.500px;
    white-space: nowrap;
}
.check {
    width: 22px;
    height: 21px;
    margin: 0 6px 0 3px;
    border: 2px solid #72bce9;
    border-radius: 4px;
    background-color: #fff;
    box-shadow: inset 0 0 0 2px #fff, inset 0 0 0 12px #3c9be0;
}
.check-grid {
    display: grid;
    grid-template-columns: 189px 1fr;
    grid-auto-rows: 38px;
    align-items: center;
}
.panel-rule {
    height: 3px;
    margin-top: 10px;
    background-color: #b9b9b9;
}
.update-btn {
    display: block;
    width: 100%;
    height: 39px;
    margin-top: 9px;
    border: 1px solid #aeb2b5;
    border-radius: 5px;
    background: linear-gradient(#e3e5e7, #cbcfd2);
    color: #111;
    font-family: inherit;
    font-size: 18.500px;
}
.panel-link {
    margin: 12px 0 0;
    font-size: 18.500px;
    white-space: nowrap;
}
.panel-link a {
    color: #1111dd;
}
.panel-link strong {
    color: #ee0000;
}

/* file menu popup */
.popup {
    position: absolute;
    left: 3px;
    top: 69px;
    width: 174px;
    height: 74px;
    padding: 2px;
    background-color: #f2f2f2;
    border: 1px solid #dcdcdc;
    box-shadow: 3px 4px 3px rgba(0, 0, 0, 0.45);
    z-index: 5;
    font-size: 18px;
}
.popup-item {
    height: 33px;
    line-height: 33px;
    padding-left: 46px;
    margin-bottom: 1px;
}
.popup-hot {
    background-color: #90c8f6;
}

/* save as dialog */
.dialog {
    position: absolute;
    left: 24px;
    top: 154px;
    width: 1356px;
    height: 764px;
    display: flex;
    flex-direction: column;
    background-color: #fff;
    border: 1px solid #a8a8a8;
    border-radius: 8px;
    overflow: hidden;
    z-index: 4;
}
.dlg-title {
    height: 44px;
    display: flex;
    align-items: center;
    padding-left: 12px;
    background: linear-gradient(90deg, #e8f7e1 0%, #ebf6e1 50%, #f0f5df 100%);
    font-size: 16.500px;
}
.dlg-logo {
    width: 23px;
    height: 24px;
    margin-right: 8px;
}
.dlg-close {
    width: 15px;
    height: 15px;
    margin-left: auto;
    margin-right: 15px;
    fill: none;
    stroke: #222;
    stroke-width: 1.500;
}
.dlg-nav {
    height: 81px;
    display: flex;
    align-items: center;
    font-size: 17.500px;
    color: #222;
}
.nav-icons {
    width: 170px;
    height: 24px;
    margin: 0 26px 0 21px;
}
.nav-off, .nav-up, .nav-line {
    fill: none;
    stroke-width: 1.500;
}
.nav-off {
    stroke: #b0b0b0;
}
.nav-up, .nav-line {
    stroke: #707070;
}
.addr {
    width: 833px;
    height: 49px;
    display: flex;
    align-items: center;
    gap: 10px;
    padding-left: 11px;
    border: 1px solid #dedede;
    white-space: nowrap;
}
.addr-folder {
    width: 23px;
    height: 19px;
}
.crumb-sep {
    color: #777;
}
.addr-tools {
    width: 70px;
    height: 20px;
    margin-left: auto;
    margin-right: 16px;
}
.search-box {
    width: 290px;
    height: 50px;
    margin-left: 18px;
    display: flex;
    align-items: center;
    justify-content: space-between;
    padding: 0 14px;
    border: 1px solid #dedede;
    color: #777;
    font-size: 17px;
    white-space: nowrap;
}
.search-glass {
    width: 16px;
    height: 16px;
    fill: none;
    stroke: #555;
    stroke-width: 2;
}
.dlg-tools {
    height: 44px;
    display: flex;
    align-items: center;
    padding-left: 25px;
    background-color: #f5f6f7;
    border-bottom: 1px solid #ededed;
    color: #333;
    font-size: 17px;
}
.tools-item {
    margin-right: 40px;
}
.caret {
    display: inline-block;
    width: 0;
    height: 0;
    margin-left: 3px;
    vertical-align: middle;
    border-left: 5px solid transparent;
    border-right: 5px solid transparent;
    border-top: 6px solid #333;
}
.view-icon {
    width: 18px;
    height: 14px;
    margin-left: auto;
    fill: none;
    stroke: #222;
    stroke-width: 1.200;
}
.caret-dark {
    margin: 0 49px 0 15px;
    border-top-color: #1a3a5c;
}
.help {
    width: 24px;
    height: 24px;
    margin-right: 21px;
    display: flex;
    align-items: center;
    justify-content: center;
    border-radius: 50%;
    background-color: #0a7bd7;
    color: #fff;
    font-size: 14px;
    font-weight: bold;
}
.dlg-body {
    height: 366px;
    display: flex;
    overflow: hidden;
}
.side {
    width: 200px;
    padding-top: 1px;
    overflow: hidden;
    font-size: 17.500px;
}
.side-row {
    height: 46px;
    display: flex;
    align-items: center;
    white-space: nowrap;
    color: #222;
}
.ico-folder {
    width: 22px;
    height: 18px;
    flex: none;
    margin-right: 8px;
}
.side-folder {
    padding-left: 48px;
}
.side-rule {
    height: 1px;
    margin: 23px 13px 21px 13px;
    background-color: #e0e0e0;
}
.side-pc {
    padding-left: 16px;
}
.chev-down {
    width: 16px;
    height: 10px;
    margin-right: 16px;
    fill: none;
    stroke: #333;
    stroke-width: 2;
}
.ico-pc {
    width: 24px;
    height: 30px;
    margin-right: 7px;
}
.pc-screen {
    fill: #35b5dc;
}
.pc-stand {
    fill: none;
    stroke: #888;
    stroke-width: 1.500;
}
.side-drive {
    padding-left: 30px;
}
.ico-chev {
    width: 10px;
    height: 16px;
    flex: none;
    margin-right: 16px;
}
.ico-drive {
    width: 20px;
    height: 12px;
    flex: none;
    margin-right: 9px;
}
.ico-win {
    width: 20px;
    height: 22px;
    flex: none;
    margin-right: 9px;
}
.win-sq {
    fill: #1a7fd0;
}
.side-hot {
    margin-left: 3px;
    margin-right: -2px;
    padding-left: 27px;
    background-color: #d9d9d9;
    border: 1px solid #9c9c9c;
}
.side-scroll, .list-scroll {
    width: 23px;
    flex: none;
    position: relative;
    background-color: #f0f0f0;
}
.side-scroll .thumb, .list-scroll .thumb {
    position: absolute;
    width: 2px;
    background-color: #8a8a8a;
}
.side-scroll .thumb {
    left: 11px;
    top: 207px;
    height: 90px;
}
.list-scroll {
    background-color: #f9f9f9;
}
.list-scroll .thumb {
    left: 10px;
    top: 26px;
    height: 86px;
}
.list {
    flex: 1;
    overflow: hidden;
}
.list-head {
    height: 41px;
    display: flex;
    margin-bottom: 6px;
    color: #4c607a;
    font-size: 17px;
}
.list-head span {
    display: flex;
    align-items: center;
    padding-left: 9px;
    border-right: 1px solid #e5e5e5;
}
.col-name {
    position: relative;
    width: 396px;
    padding-left: 49px !important;
}
.sort-mark {
    position: absolute;
    left: 212px;
    top: 2px;
    width: 12px;
    height: 7px;
    fill: none;
    stroke: #888;
    stroke-width: 1.200;
}
.col-date {
    width: 206px;
}
.col-type {
    width: 172px;
}
.col-size {
    width: 115px;
}
.file-row {
    height: 40px;
    display: flex;
    align-items: center;
    font-size: 17.500px;
    white-space: nowrap;
}
.file-name {
    width: 405px;
    padding-left: 32px;
    display: flex;
    align-items: center;
    color: #222;
}
.file-date {
    width: 206px;
    color: #6d6d6d;
}
.file-type {
    color: #6d6d6d;
    font-size: 17px;
}
.dlg-foot {
    flex: 1;
    position: relative;
    display: flex;
    flex-direction: column;
    background-color: #f5f5f5;
}
.foot-fields {
    height: 143px;
    padding-top: 16px;
}
.foot-row {
    display: flex;
    align-items: stretch;
}
.foot-row-name {
    height: 36px;
    margin-bottom: 4px;
}
.foot-row-type {
    height: 34px;
}
.foot-lbl {
    width: 172px;
    margin-right: 7px;
    display: flex;
    align-items: center;
    justify-content: flex-end;
    color: #222;
    font-size: 17px;
}
.foot-input, .foot-combo {
    width: 1167px;
    position: relative;
    display: flex;
    align-items: center;
    border: 1px solid #8c8c8c;
    border-radius: 2px;
    background-color: #fff;
    font-size: 17.500px;
}
.foot-combo {
    padding-left: 4px;
    background-color: #cce4f7;
    border-color: #0078d7;
}
.foot-chev {
    position: absolute;
    right: 5px;
    top: 14px;
    width: 13px;
    height: 8px;
    fill: none;
    stroke: #555;
    stroke-width: 1.200;
}
.dropdown {
    position: absolute;
    top: 33px;
    left: -1px;
    right: -1px;
    height: 103px;
    background-color: #fff;
    border: 1px solid #0078d7;
    border-top: none;
    box-shadow: 3px 4px 5px rgba(0, 0, 0, 0.3);
    z-index: 2;
}
.dd-item {
    height: 24.500px;
    line-height: 24.500px;
    padding-left: 3px;
    color: #111;
}
.dd-hot {
    height: 27px;
    line-height: 27px;
    background-color: #0078d7;
    color: #cfe6fb;
}
.foot-band {
    flex: 1;
    display: flex;
    align-items: flex-start;
    padding: 28px 26px 0 24px;
    background-color: #f0f0f0;
}
.hide-folders {
    display: flex;
    align-items: center;
    gap: 12px;
    margin-right: auto;
    color: #222;
    font-size: 17px;
}
.chev-up {
    width: 12px;
    height: 8px;
    fill: none;
    stroke: #333;
    stroke-width: 2;
}
.dlg-btn {
    width: 122px;
    height: 30px;
    margin-left: 21px;
    border: 1px solid #d0d0d0;
    border-radius: 4px;
    background-color: #fdfdfd;
    font-family: inherit;
    font-size: 15px;
}
.dlg-btn-main {
    border: 2px solid #0078d7;
}
.grip {
    position: absolute;
    right: 1px;
    bottom: 2px;
    width: 14px;
    height: 14px;
    fill: none;
    stroke: #aaa;
    stroke-width: 1.500;
}

/* numbered callouts */
.badge {
    position: absolute;
    width: 46px;
    height: 46px;
    display: flex;
    align-items: center;
    justify-content: center;
    border: 4px solid #fff;
    border-radius: 50%;
    background: radial-gradient(circle at 50% 45%, #f01010 55%, #c80808 100%);
    box-shadow: 1px 3px 5px rgba(0, 0, 0, 0.55);
    color: #fff;
    font-family: "Liberation Sans", sans-serif;
    font-size: 26px;
    font-weight: bold;
    z-index: 6;
}
.badge-1 {
    left: 117px;
    top: 100px;
}
.badge-2 {
    left: 665px;
    top: 82px;
}
.badge-3 {
    left: 490px;
    top: 786px;
}
```
